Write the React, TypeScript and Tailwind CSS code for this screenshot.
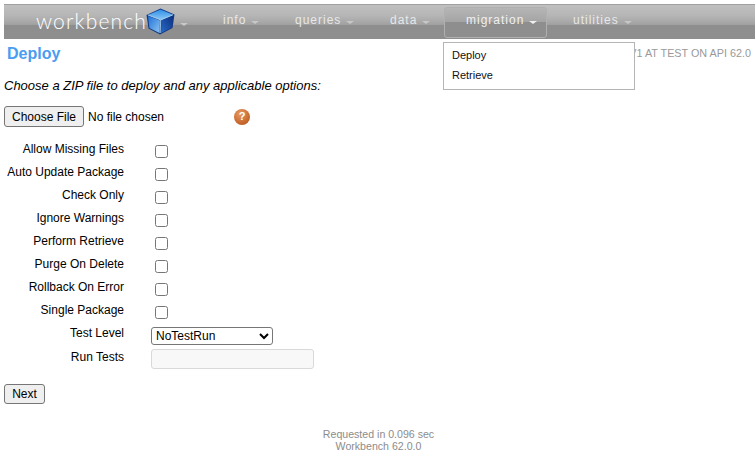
const font = "font-['Liberation_Sans',Arial,sans-serif]";

const fields = [
  "Allow Missing Files",
  "Auto Update Package",
  "Check Only",
  "Ignore Warnings",
  "Perform Retrieve",
  "Purge On Delete",
  "Rollback On Error",
  "Single Package",
];

const Caret = ({ light }: { light?: boolean }) => (
  <span
    className={`ml-[5px] mt-[5px] inline-block h-0 w-0 border-x-[4px] border-t-[3px] border-x-transparent ${
      light ? "border-t-[#f0f0f0]" : "border-t-[#c8c8c8]"
    }`}
  />
);

const NavItem = ({ label, box, active }: { label: string; box: string; active?: boolean }) => (
  <div
    className={`flex h-[31px] items-center rounded-[3px] border pb-[4px] text-[12px] tracking-[1px] ${box} ${
      active
        ? "border-[#b0b0b0] bg-[linear-gradient(#b6b6b6_0%,#a4a4a4_48%,#8e8e8e_50%,#8e8e8e_100%)] text-[#f0f0f0]"
        : "border-transparent text-[#e8e8e8]"
    }`}
  >
    {label}
    <Caret light={active} />
  </div>
);

const Cube = () => (
  <svg width="29" height="27" viewBox="0 0 29 27" className="-mt-[2px] shrink-0">
    <defs>
      <linearGradient id="cube-top" x1="0" y1="0" x2="0" y2="1">
        <stop offset="0" stopColor="#2f8fe8" />
        <stop offset="1" stopColor="#8cc9f5" />
      </linearGradient>
      <linearGradient id="cube-left" x1="0" y1="0" x2="1" y2="1">
        <stop offset="0" stopColor="#1b6fd8" />
        <stop offset="1" stopColor="#8fc4f2" />
      </linearGradient>
      <linearGradient id="cube-right" x1="1" y1="0" x2="0" y2="1">
        <stop offset="0" stopColor="#0b2f80" />
        <stop offset="1" stopColor="#2a6cc8" />
      </linearGradient>
    </defs>
    <path d="M14.5 0.5 L28.5 6.5 L26.5 20 L14 26.5 L2.5 20.5 L0.5 7 Z" fill="#123a86" />
    <path d="M14.5 1.5 L27 6.8 L15 12 L2 7 Z" fill="url(#cube-top)" />
    <path d="M2 8 L14 12.5 L13.5 25 L3.5 20 Z" fill="url(#cube-left)" />
    <path d="M15.5 12.5 L27 7.8 L25.5 19.5 L15 25 Z" fill="url(#cube-right)" />
    <path d="M2 7 L14.7 12 L27 6.8 M14.7 12 L14.2 25" fill="none" stroke="#b9e0fa" strokeWidth="0.8" />
  </svg>
);

const HelpIcon = () => (
  <span className="flex h-[16px] w-[16px] items-center justify-center rounded-full bg-[radial-gradient(circle_at_40%_30%,#e89a60,#c2642a_70%,#9c4e1e)] text-[11px] font-bold leading-none text-white">
    ?
  </span>
);

export default function App() {
  return (
    <div className={`h-[459px] w-[755px] overflow-hidden bg-white text-[12px] text-black ${font}`}>
      <div className="pl-[4px] pt-[4px]">
        <nav className="flex h-[35px] items-center border-t border-[#a0a0a0] bg-[linear-gradient(#c0c0c0_0%,#b6b6b6_30%,#a8a8a8_50%,#a0a0a0_58%,#8e8e8e_60%,#8e8e8e_100%)] pl-[32px]">
          <span className="-mt-[3px] w-[110px] font-['Lato',sans-serif] text-[21px] font-light leading-none tracking-[1.15px] text-white">
            workbench
          </span>
          <Cube />
          <Caret />
          <div className="ml-[13px] flex items-center">
            <NavItem label="info" box="w-[72px] pl-[21px]" />
            <NavItem label="queries" box="w-[95px] pl-[21px]" />
            <NavItem label="data" box="w-[76px] pl-[21px]" />
            <NavItem label="migration" box="w-[103px] pl-[21px]" active />
            <NavItem label="utilities" box="w-[100px] pl-[25px]" />
          </div>
        </nav>
      </div>

      <div className="relative px-[4px]">
        <div className="flex h-[30px] items-center justify-between">
          <h1 className="pl-[3px] text-[16px] font-bold text-[#4a9df0]">Deploy</h1>
          <span className="-mt-[2px] text-[10.8px] text-[#999999]">V1 AT TEST ON API 62.0</span>
        </div>

        <div className="absolute left-[443px] top-[3px] h-[48px] w-[192px] border border-[#b5b5b5] bg-white px-[8px] pt-[5px] text-[11px]">
          <div className="h-[20px] leading-[14px] text-[#111111]">Deploy</div>
          <div className="h-[20px] leading-[14px] text-[#111111]">Retrieve</div>
        </div>

        <p className="mt-[9px] text-[13px] italic leading-[15px]">Choose a ZIP file to deploy and any applicable options:</p>

        <div className="mt-[13px] flex h-[21px] items-center">
          <input
            type="file"
            className="w-[230px] text-[12px] file:h-[21px] file:w-[80px] file:rounded-[3px] file:border file:border-[#767676] file:bg-[#efefef] file:text-[12px]"
          />
          <HelpIcon />
        </div>

        <div className="mt-[12px] flex flex-col">
          {fields.map((f) => (
            <div key={f} className="flex h-[23px] items-start">
              <label className="w-[120px] pt-[3px] text-right leading-[14px]">{f}</label>
              <input type="checkbox" className="m-0 ml-[31px] mt-[6px] h-[13px] w-[13px]" />
            </div>
          ))}
          <div className="flex h-[26px] items-start">
            <label className="w-[120px] pt-[3px] text-right leading-[14px]">Test Level</label>
            <select className="ml-[27px] mt-[4px] h-[18px] w-[122px] rounded-[3px] border border-[#767676] bg-white text-[12px]">
              <option>NoTestRun</option>
            </select>
          </div>
          <div className="flex items-start">
            <label className="w-[120px] pt-[1px] text-right leading-[14px]">Run Tests</label>
            <input disabled className="ml-[27px] h-[20px] w-[163px] rounded-[3px] border border-[#d9d9d9] bg-[#f8f8f8]" />
          </div>
        </div>

        <button className="mt-[15px] block h-[20px] w-[41px] rounded-[3px] border border-[#767676] bg-[#efefef] text-[12px]">Next</button>
      </div>

      <footer className="ml-[2px] mt-[24px] text-center text-[10.6px] leading-[12px] text-[#8c8c8c]">
        <div>Requested in 0.096 sec</div>
        <div>Workbench 62.0.0</div>
      </footer>
    </div>
  );
}
